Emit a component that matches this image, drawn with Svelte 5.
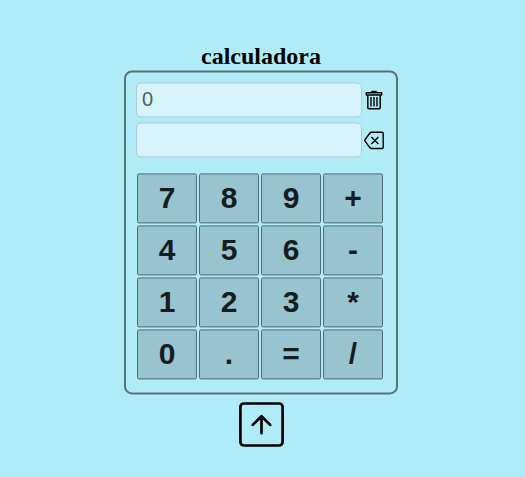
<script>
  const keys = ['7', '8', '9', '+', '4', '5', '6', '-', '1', '2', '3', '*', '0', '.', '=', '/'];
</script>

<main>
  <h1>calculadora</h1>
  <section class="calculator">
    <div class="line">
      <input type="text" placeholder="0" readonly />
      <button class="icon" aria-label="Limpiar">
        <svg width="22" height="22" viewBox="0 0 22 22" fill="none" stroke="#000" stroke-width="1.5">
          <path d="M4.8 6V18.2Q4.8 19.3 5.9 19.3H16.1Q17.2 19.3 17.2 18.2V6" />
          <path d="M3.3 3.4H18.7V5.6H3.3Z" stroke-width="1.4" stroke-linejoin="round" />
          <path d="M8.2 2.2H13.8" stroke-width="1.6" />
          <path d="M8 7.6V17M11 7.6V17M14 7.6V17" stroke-width="1.4" />
        </svg>
      </button>
    </div>
    <div class="line">
      <input type="text" aria-label="Resultado" readonly />
      <button class="icon" aria-label="Borrar">
        <svg width="22" height="22" viewBox="0 0 22 22" fill="none" stroke="#000" stroke-width="1.4" stroke-linejoin="round">
          <path d="M8.5 2.9H19Q20.2 2.9 20.2 4.1V17.9Q20.2 19.1 19 19.1H8.5Q7.6 19.1 7 18.4L2 11.7Q1.5 11 2 10.3L7 3.6Q7.6 2.9 8.5 2.9Z" />
          <path d="M8.4 7.5 15.4 14.5M15.4 7.5 8.4 14.5" />
        </svg>
      </button>
    </div>
    <div class="keys">
      {#each keys as key}
        <button class="key">{key}</button>
      {/each}
    </div>
  </section>
  <button class="icon up" aria-label="Subir">
    <svg width="45" height="45" viewBox="0 0 45 45" fill="none" stroke="#000" stroke-width="2.7">
      <rect x="1.4" y="1.1" width="42.2" height="42" rx="3.5" />
      <path d="M22.5 30.8V13.8M13.8 22.5 22.5 13.8 31.2 22.5" stroke-linecap="round" stroke-linejoin="round" />
    </svg>
  </button>
</main>

<style>
  :global(body) {
    background: #b0ecf7;
  }
  main {
    display: flex;
    flex-direction: column;
    align-items: center;
    padding: 42px 3px 10px 0;
    transform: translateY(0.4px);
  }
  h1 {
    margin: 0;
    font: bold 24px/28px "Liberation Serif", serif;
    color: #000;
  }
  .calculator {
    box-sizing: border-box;
    width: 274px;
    height: 324px;
    padding: 10px;
    border: 2px solid #587279;
    border-radius: 8px;
  }
  .line {
    display: flex;
    align-items: center;
    gap: 1px;
    margin-bottom: 5px;
  }
  input {
    box-sizing: border-box;
    width: 226px;
    height: 35px;
    padding: 1px 5px;
    border: 1px solid #aecbd2;
    border-radius: 5px;
    background: #d7f4fd;
    font: 20px "Liberation Sans", sans-serif;
    outline: none;
  }
  input::placeholder {
    color: #565d60;
  }
  .icon {
    display: block;
    padding: 0;
    border: 0;
    background: none;
  }
  .icon svg {
    display: block;
    overflow: visible;
  }
  .keys {
    display: grid;
    grid-template-columns: repeat(4, 60px);
    grid-auto-rows: 50px;
    gap: 2px;
    margin: 16px 0 0 1px;
  }
  .key {
    padding: 0;
    border: 1px solid #4f6b72;
    border-radius: 2px;
    background: #98c4cf;
    color: #161d1f;
    font: bold 30px "Liberation Sans", sans-serif;
  }
  .up {
    margin-top: 8px;
  }
</style>
